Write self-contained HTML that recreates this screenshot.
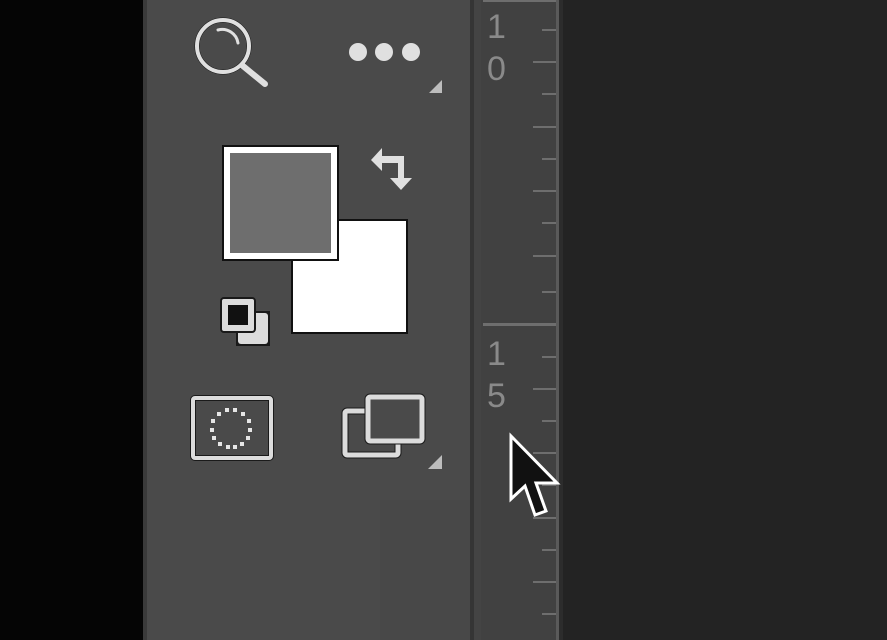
<!DOCTYPE html>
<html><head><style>
html,body{margin:0;padding:0;background:#232323;width:887px;height:640px;overflow:hidden}
svg{display:block}
</style></head><body>
<svg width="887" height="640" viewBox="0 0 887 640" xmlns="http://www.w3.org/2000/svg">
<rect x="0" y="0" width="887" height="640" fill="#232323"/>
<rect x="0" y="0" width="143" height="640" fill="#050505"/>
<rect x="143" y="0" width="4" height="640" fill="#3a3a3a"/>
<rect x="147" y="0" width="323" height="640" fill="#4a4a4a"/>
<rect x="380" y="500" width="90" height="140" fill="#484848"/>
<rect x="470" y="0" width="4" height="640" fill="#353535"/>
<rect x="474" y="0" width="7" height="640" fill="#444444"/>
<rect x="481" y="0" width="75" height="640" fill="#414141"/>
<rect x="556" y="0" width="3" height="640" fill="#5a5a5a"/>
<rect x="559" y="0" width="4" height="640" fill="#2c2c2c"/>
<g fill="#6e6e6e">
<rect x="483" y="0" width="73" height="2"/>
<rect x="542" y="29" width="14" height="2"/>
<rect x="533" y="61" width="23" height="2"/>
<rect x="542" y="93" width="14" height="2"/>
<rect x="533" y="126" width="23" height="2"/>
<rect x="542" y="158" width="14" height="2"/>
<rect x="533" y="190" width="23" height="2"/>
<rect x="542" y="222" width="14" height="2"/>
<rect x="533" y="255" width="23" height="2"/>
<rect x="542" y="291" width="14" height="2"/>
<rect x="483" y="323" width="73" height="3"/>
<rect x="542" y="356" width="14" height="2"/>
<rect x="533" y="388" width="23" height="2"/>
<rect x="542" y="420" width="14" height="2"/>
<rect x="533" y="452" width="23" height="2"/>
<rect x="542" y="484" width="14" height="2"/>
<rect x="533" y="517" width="23" height="2"/>
<rect x="542" y="549" width="14" height="2"/>
<rect x="533" y="581" width="23" height="2"/>
<rect x="542" y="613" width="14" height="2"/>
</g>
<g fill="#8a8a8a" font-family="Liberation Sans, sans-serif" font-size="34">
<text x="487" y="38">1</text>
<text x="487" y="80">0</text>
<text x="487" y="365">1</text>
<text x="487" y="407">5</text>
</g>
<g fill="none" stroke="#e0e0e0" stroke-linecap="round">
<circle cx="223" cy="46" r="26" stroke-width="5" stroke="#1a1a1a"/>
<circle cx="223" cy="46" r="26" stroke-width="4"/>
<line x1="243" y1="66" x2="265" y2="84" stroke-width="6"/>
<path d="M218 30 A16 16 0 0 1 238 43" stroke-width="3"/>
</g>
<g fill="#e0e0e0">
<circle cx="358" cy="52" r="9"/><circle cx="384" cy="52" r="9"/><circle cx="411" cy="52" r="9"/>
<path d="M442 80 L442 93 L429 93 Z" fill="#bdbdbd"/>
<path d="M442 455 L442 469 L428 469 Z" fill="#bdbdbd"/>
</g>
<rect x="291" y="219" width="117" height="115" fill="#111"/>
<rect x="293" y="221" width="113" height="111" fill="#fff"/>
<rect x="222" y="145" width="117" height="116" fill="#111"/>
<rect x="224" y="147" width="113" height="112" fill="#fff"/>
<rect x="230" y="153" width="101" height="100" fill="#6e6e6e"/>
<g fill="#e0e0e0">
<path d="M371 160 L382 148 L382 156 L404 156 L404 178 L412 178 L401 190 L390 178 L398 178 L398 163 L382 163 L382 171 Z"/>
</g>
<rect x="236" y="311" width="34" height="35" fill="#1a1a1a"/>
<rect x="238" y="313" width="30" height="31" rx="3" fill="#dcdcdc"/>
<rect x="221" y="298" width="34" height="34" rx="3" fill="#dcdcdc" stroke="#1a1a1a" stroke-width="2"/>
<rect x="228" y="305" width="20" height="20" fill="#111"/>
<rect x="193" y="398" width="78" height="60" rx="2" fill="none" stroke="#1a1a1a" stroke-width="6"/>
<rect x="193" y="398" width="78" height="60" rx="2" fill="none" stroke="#dcdcdc" stroke-width="4"/>
<g fill="#e6e6e6">
<rect x="225" y="408" width="4" height="4"/><rect x="233" y="408" width="4" height="4"/>
<rect x="217" y="412" width="4" height="4"/><rect x="241" y="412" width="4" height="4"/>
<rect x="211" y="419" width="4" height="4"/><rect x="247" y="419" width="4" height="4"/>
<rect x="210" y="428" width="4" height="4"/><rect x="248" y="428" width="4" height="4"/>
<rect x="212" y="436" width="4" height="4"/><rect x="246" y="436" width="4" height="4"/>
<rect x="218" y="442" width="4" height="4"/><rect x="240" y="442" width="4" height="4"/>
<rect x="226" y="445" width="4" height="4"/><rect x="233" y="445" width="4" height="4"/>
</g>
<rect x="345" y="411" width="53" height="44" rx="2" fill="none" stroke="#1a1a1a" stroke-width="7"/>
<rect x="345" y="411" width="53" height="44" rx="2" fill="none" stroke="#dcdcdc" stroke-width="5"/>
<rect x="368" y="397" width="54" height="44" rx="2" fill="#4a4a4a" stroke="#1a1a1a" stroke-width="7"/>
<rect x="368" y="397" width="54" height="44" rx="2" fill="#4a4a4a" stroke="#dcdcdc" stroke-width="5"/>
<path d="M511 436 L511 499 L525 486 L535 515 L546 511 L536 483 L557 483 Z" fill="#111" stroke="#fff" stroke-width="3" stroke-linejoin="miter"/>
</svg>
</body></html>
